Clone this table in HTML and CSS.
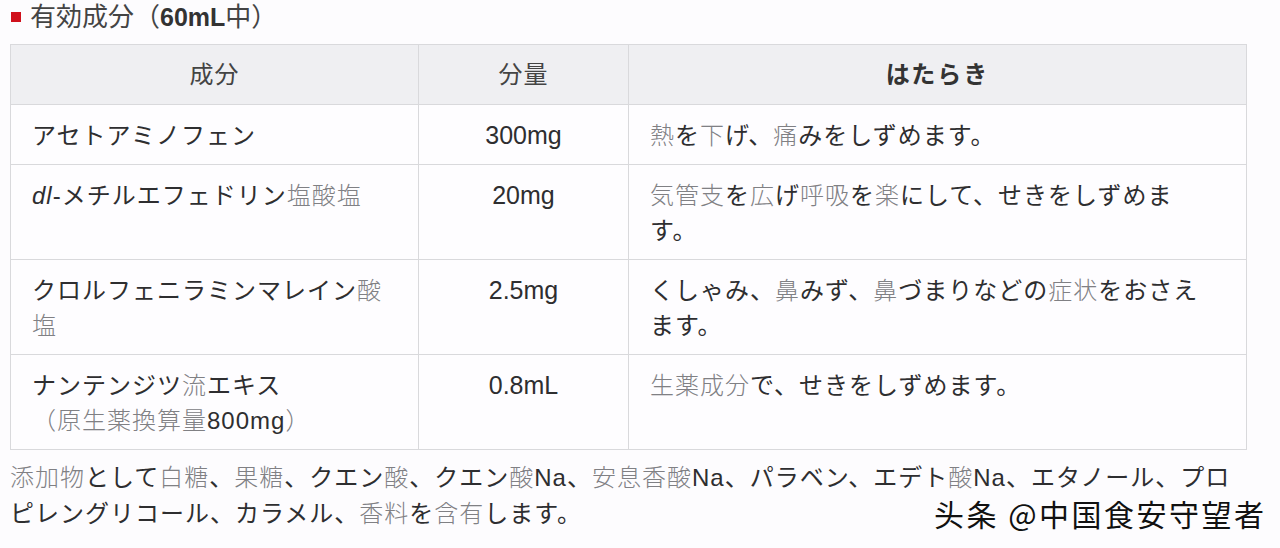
FILE: index.html
```html
<!DOCTYPE html>
<html lang="ja">
<head>
<meta charset="utf-8">
<link rel="stylesheet" href="styles.css">
</head>
<body>
<div class="page">
  <h2 class="title"><span class="mark"></span><span class="tk">有効成分（</span><b>60mL</b><span class="tk">中）</span></h2>
  <table class="tbl">
    <colgroup>
      <col class="c1"><col class="c2"><col class="c3">
    </colgroup>
    <thead>
      <tr>
        <th><span class="hk">成分</span></th>
        <th><span class="hk">分量</span></th>
        <th><b>はたらき</b></th>
      </tr>
    </thead>
    <tbody>
      <tr>
        <td class="name">アセトアミノフェン</td>
        <td class="amt">300mg</td>
        <td class="act"><span class="k">熱</span>を<span class="k">下</span>げ、<span class="k">痛</span>みをしずめます。</td>
      </tr>
      <tr>
        <td class="name"><i>dl</i>-メチルエフェドリン<span class="k">塩酸塩</span></td>
        <td class="amt">20mg</td>
        <td class="act"><span class="k">気管支</span>を<span class="k">広</span>げ<span class="k">呼吸</span>を<span class="k">楽</span>にして、せきをしずめま<br>す。</td>
      </tr>
      <tr>
        <td class="name">クロルフェニラミンマレイン<span class="k">酸</span><br><span class="k">塩</span></td>
        <td class="amt">2.5mg</td>
        <td class="act">くしゃみ、<span class="k">鼻</span>みず、<span class="k">鼻</span>づまりなどの<span class="k">症状</span>をおさえ<br>ます。</td>
      </tr>
      <tr>
        <td class="name">ナンテンジツ<span class="k">流</span>エキス<br><span class="k">（原生薬換算量</span>800mg<span class="k">）</span></td>
        <td class="amt">0.8mL</td>
        <td class="act"><span class="k">生薬成分</span>で、せきをしずめます。</td>
      </tr>
    </tbody>
  </table>
  <p class="note"><span class="k">添加物</span>として<span class="k">白糖</span>、<span class="k">果糖</span>、クエン<span class="k">酸</span>、クエン<span class="k">酸</span>Na、<span class="k">安息香酸</span>Na、パラベン、エデト<span class="k">酸</span>Na、エタノール、プロ<br>ピレングリコール、カラメル、<span class="k">香料</span>を<span class="k">含有</span>します。</p>
  <div class="watermark">头条 @中国食安守望者</div>
</div>
</body>
</html>
```

FILE: styles.css
```css
html, body {
  margin: 0;
  padding: 0;
  background: #fdfcfe;
}

.page {
  position: relative;
  width: 1280px;
  height: 548px;
  overflow: hidden;
  font-family: "Liberation Sans", "Noto Sans CJK JP", sans-serif;
  font-size: 24px;
  letter-spacing: 1px;
  color: #2e2e30;
}

.k {
  color: #808084;
  font-weight: 300;
}

.title {
  margin: 0 0 10px 0;
  height: 34px;
  display: flex;
  align-items: center;
  font-size: 26px;
  font-weight: normal;
  line-height: 34px;
  letter-spacing: 0;
  color: #3a3a3a;
  padding-left: 11px;
}

.tk {
  color: #444;
}

.title b {
  font-weight: bold;
  color: #333;
  font-size: 25px;
}

.mark {
  display: inline-block;
  width: 10px;
  height: 10px;
  background: #d0101c;
  margin-right: 9px;
}

.tbl {
  margin-left: 10px;
  width: 1236px;
  border-collapse: collapse;
  table-layout: fixed;
  background: #fefdff;
}

.c1 { width: 408px; }
.c2 { width: 210px; }
.c3 { width: 618px; }

.tbl th,
.tbl td {
  border: 1px solid #d9d9dc;
  line-height: 35px;
  vertical-align: top;
}

.tbl th {
  background: #efeff2;
  padding: 12px 10px;
  text-align: center;
  font-weight: normal;
  color: #333;
}

.hk {
  color: #444;
}

.tbl th b {
  font-weight: bold;
  color: #333;
  letter-spacing: 2px;
}

.tbl td {
  padding: 13px 10px 11px 21px;
}

.tbl td.name {
  padding-right: 20px;
}

.tbl td.amt {
  text-align: center;
  padding: 13px 10px 11px 10px;
  letter-spacing: 0;
  font-size: 25px;
}

.tbl td.act {
  padding-right: 20px;
}

.note {
  margin: 10px 0 0 10px;
  width: 1260px;
  line-height: 36px;
}

.watermark {
  position: absolute;
  left: 934px;
  top: 494px;
  font-family: "Noto Sans CJK SC", sans-serif;
  font-size: 30px;
  line-height: 38px;
  color: #111;
  letter-spacing: 2.5px;
  text-shadow: 0 0 2px #fff, 0 0 2px #fff;
}
```
